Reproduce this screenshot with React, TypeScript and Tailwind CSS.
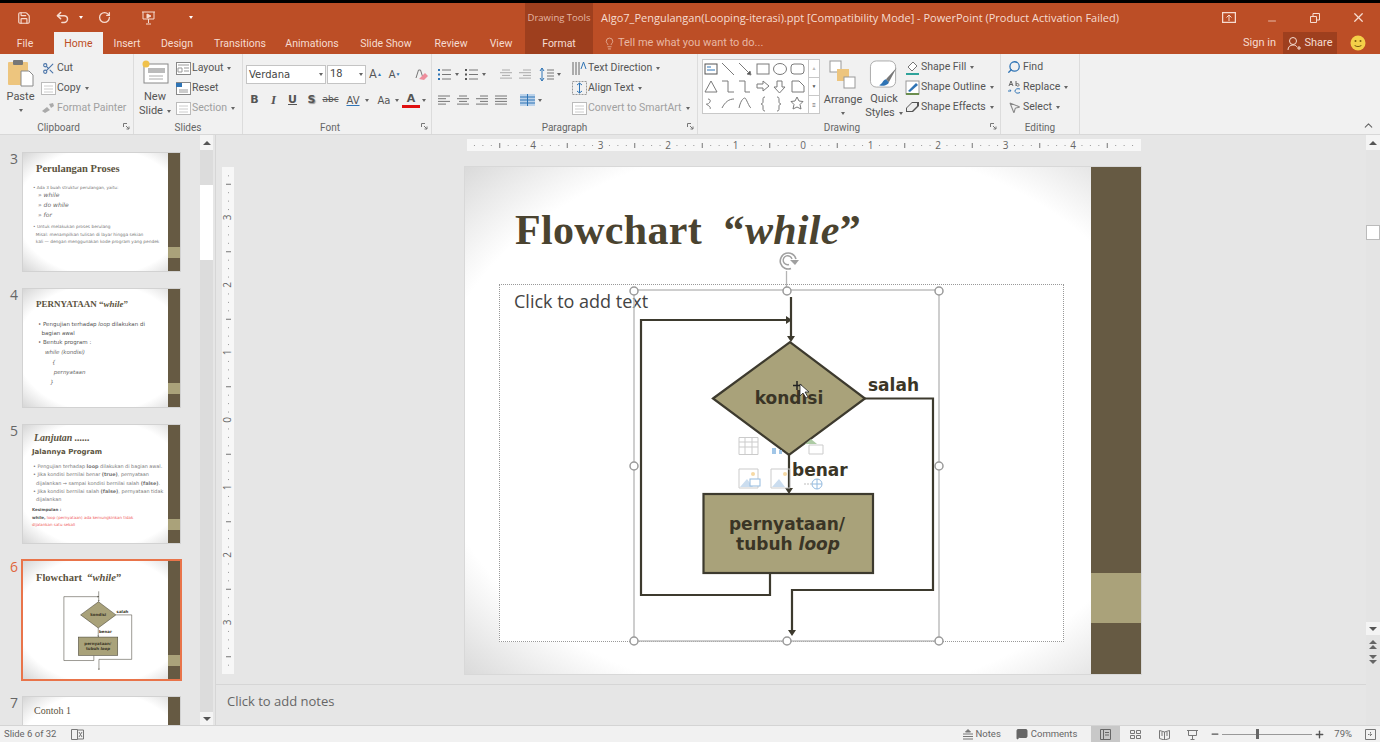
import React from 'react';
import { ChevronDown, Scissors, Undo2, RotateCcw, Save, X, Minus, Lightbulb, Search, MousePointer2, Plus, MessageSquare } from 'lucide-react';

const FONT = { fontFamily: '"Open Sans", "Noto Sans", sans-serif' };
const UI = { fontFamily: 'Roboto, "Open Sans", sans-serif' };

function Caret({ className = '' }: { className?: string }) {
  return <span className={`inline-block ml-1 align-middle w-0 h-0 border-x-[2.5px] border-x-transparent border-t-[3px] border-t-[#666] ${className}`} />;
}

function Launcher() {
  return (
    <svg className="absolute right-[3px] bottom-[4px]" width="7" height="7" viewBox="0 0 7 7" fill="none" stroke="#777">
      <path d="M.5 4V.5H4M3 3l3 3M6 3.5V6H3.5" />
    </svg>
  );
}

function Group({ label, width, pr = 0, children }: { label: string; width: number; pr?: number; children: React.ReactNode }) {
  return (
    <div className="relative h-full flex flex-col border-r border-[#dcdcdc] shrink-0" style={{ width }}>
      <div className="flex-1 flex min-h-0 pt-[4px]">{children}</div>
      <div className="h-[14px] text-center text-[10px] leading-[16px] text-[#666]" style={{ paddingRight: pr }}>{label}</div>
      {label !== 'Slides' && label !== 'Editing' && <Launcher />}
    </div>
  );
}

function Row({ icon, text, dim, caret, pl = 0 }: { icon?: React.ReactNode; text: string; dim?: boolean; caret?: boolean; pl?: number }) {
  return (
    <div className={`h-[20px] flex items-center whitespace-nowrap text-[10.5px] ${dim ? 'text-[#a0a0a0]' : 'text-[#555]'}`} style={{ paddingLeft: pl }}>
      <span className="w-[16px] h-[16px] flex items-center justify-center shrink-0">{icon}</span>
      <span className="ml-[1px]">{text}</span>
      {caret && <Caret />}
    </div>
  );
}

function Tab({ children, w, active }: { children: React.ReactNode; w: number; active?: boolean }) {
  return (
    <div className={`h-full flex items-center justify-center pt-[2px] text-[10.5px] shrink-0 ${active ? 'bg-[#f1f1f1] text-[#BC4E26]' : 'text-[#f6dcd1]'}`} style={{ ...UI, width: w }}>
      {children}
    </div>
  );
}

function PasteIcon() {
  return (
    <svg width="27" height="28" viewBox="0 0 27 28">
      <rect x="1" y="3" width="20" height="23" rx="1" fill="#EDC57E" />
      <rect x="6" y="1" width="10" height="5" rx="1" fill="#777" />
      <path d="M14 12h8l4 4v11H14z" fill="#fff" stroke="#8a8a8a" />
    </svg>
  );
}

function NewSlideIcon() {
  return (
    <svg width="28" height="28" viewBox="0 0 28 28">
      <rect x="3" y="5" width="24" height="19" fill="#fff" stroke="#888" />
      <rect x="7" y="9" width="17" height="5" fill="#bbb" />
      <path d="M8 17h14M8 20h14" stroke="#aaa" />
      <circle cx="5" cy="5" r="3.5" fill="#F0C14B" />
    </svg>
  );
}

function SmallLayout({ kind }: { kind: number }) {
  return (
    <svg width="15" height="13" viewBox="0 0 15 13" fill="none">
      <rect x=".5" y=".5" width="14" height="12" fill="#fff" stroke={kind === 2 ? '#bbb' : '#888'} />
      {kind === 0 && <path d="M2 3h11M2 6h4v4H2zM8 6h5M8 9h5" stroke="#999" />}
      {kind === 1 && <path d="M0 1h6v4H0z" fill="#2F74B5" />}
      {kind === 1 && <path d="M3 8h9M3 10h9" stroke="#999" />}
      {kind === 2 && <path d="M3 4h9M3 7h9M3 10h9" stroke="#ccc" />}
    </svg>
  );
}

function Lines({ kind, color = '#777' }: { kind: number; color?: string }) {
  const rows: [number, number][][] = [
    [[1, 13], [1, 9], [1, 13], [1, 9]],
    [[3, 11], [1, 13], [3, 11], [1, 13]],
    [[5, 13], [1, 13], [5, 13], [1, 13]],
    [[1, 13], [1, 13], [1, 13], [1, 13]],
  ];
  return (
    <svg width="14" height="12" viewBox="0 0 14 12" stroke={color}>
      {rows[kind].map(([a, b], i) => (
        <path key={i} d={`M${a} ${2 + i * 2.7}H${b}`} />
      ))}
    </svg>
  );
}

function BulletIcon({ numbered }: { numbered?: boolean }) {
  return (
    <svg width="15" height="13" viewBox="0 0 15 13" fill="none" stroke="#777">
      <path d="M5 2h9M5 6.500h9M5 11h9" />
      <path d="M1 2h2M1 6.500h2M1 11h2" stroke={numbered ? '#555' : '#2F74B5'} strokeWidth="2" />
    </svg>
  );
}

function ShapeGallery() {
  return (
    <div className="w-[118px] h-[55px] mt-[1px] ml-[4px] bg-white border border-[#c8c8c8] flex">
      <svg width="105" height="53" viewBox="703 60 105 53" fill="none" stroke="#7a7a7a">
        <rect x="705" y="64" width="12" height="10" stroke="#555" />
        <path d="M707 67h4M707 70h8" stroke="#2F74B5" />
        <path d="M722 63l12 12M739 63l12 12" />
        <path d="M751 75l-4-1 3-3z" fill="#555" />
        <rect x="757" y="64" width="12" height="10" />
        <ellipse cx="780" cy="69" rx="6.500" ry="5.500" />
        <rect x="791" y="64" width="13" height="10" rx="3" />
        <path d="M705 92l6-11 6 11zM722 81h6v11h6M739 81h6v11h5M757 84h6v-3l6 5-6 5v-3h-6zM777 81h5v6h3l-5.500 6-5.500-6h3zM792 81h7l5 5v6h-12z" />
        <path d="M708 99c4 0 2 5-1 5s5 2 3 5M722 108c3-6 7-9 12-9M739 108c2-9 5-10 6-10s4 9 6 10" />
        <path d="M765 97c-2 0-2 1-2 3v2c0 1-1 2-2 2 1 0 2 1 2 2v2c0 2 0 3 2 3M777 97c2 0 2 1 2 3v2c0 1 1 2 2 2-1 0-2 1-2 2v2c0 2 0 3-2 3" />
        <path d="M797 97l2 4 4 .5-3 3 1 4.500-4-2-4 2 1-4.500-3-3 4-.5z" />
      </svg>
      <div className="flex-1 flex flex-col border-l border-[#c8c8c8]">
        <div className="flex-1 flex items-center justify-center text-[5px] text-[#bbb]">▲</div>
        <div className="flex-1 flex items-center justify-center border-y border-[#c8c8c8] text-[5px] text-[#555]">▼</div>
        <div className="flex-1 flex items-center justify-center text-[6px] text-[#555]">≡</div>
      </div>
    </div>
  );
}

function Ribbon() {
  return (
    <div className="h-[81px] bg-[#f1f1f1] border-b border-[#d8d8d8] flex relative" style={UI}>
      <Group label="Clipboard" width={134} pr={16}>
        <div className="w-[39px] flex flex-col items-center text-[11px] text-[#555] ml-[1px] mt-[-1px]">
          <div className="h-[30px] pt-[2px]"><PasteIcon /></div>
          <div className="mt-[3px] leading-[14px]">Paste</div>
          <Caret className="!ml-0 mt-[5px]" />
        </div>
        <div>
          <Row icon={<Scissors size={13} color="#4a74a8" />} text="Cut" />
          <Row icon={<SmallLayout kind={2} />} text="Copy" caret />
          <Row dim icon={<svg width="14" height="12" viewBox="0 0 14 12"><path d="M1 9l5-4 3 3-5 3zM8 2l4-1 1 3-3 2z" fill="#aaa" /></svg>} text="Format Painter" />
        </div>
      </Group>
      <Group label="Slides" width={109}>
        <div className="w-[40px] flex flex-col items-center text-[11px] leading-[14px] text-[#555] ml-[1px] mt-[-1px]">
          <div className="h-[30px] pt-[2px]"><NewSlideIcon /></div>
          <div className="mt-[3px]">New</div>
          <div>Slide<Caret /></div>
        </div>
        <div>
          <Row icon={<SmallLayout kind={0} />} text="Layout" caret />
          <Row icon={<SmallLayout kind={1} />} text="Reset" />
          <Row dim icon={<SmallLayout kind={2} />} text="Section" caret />
        </div>
      </Group>
      <Group label="Font" width={189} pr={14}>
        <div className="flex flex-col pl-[3px] mt-[-1px]">
          <div className="h-[28px] flex items-start pt-[8px]">
            <div className="w-[80px] h-[19px] bg-white border border-[#c4c4c4] flex items-center justify-between px-[2px] text-[#444]" style={{ fontFamily: '"DejaVu Sans", sans-serif', fontSize: 10 }}>
              Verdana<Caret />
            </div>
            <div className="w-[39px] h-[19px] ml-[1px] bg-white border border-[#c4c4c4] flex items-center justify-between px-[2px] text-[11px] text-[#444]">
              18<Caret />
            </div>
            <span className="w-[19px] text-center text-[12px] leading-[19px] text-[#555]">A<sup className="text-[5px] text-[#2F74B5]">▲</sup></span>
            <span className="w-[19px] text-center text-[11px] leading-[19px] text-[#555]">A<sup className="text-[5px] text-[#2F74B5]">▼</sup></span>
            <svg className="ml-[9px] mt-[2px]" width="15" height="15" viewBox="0 0 15 15">
              <path d="M3 11l2.500-8h2L10 11" stroke="#777" fill="none" />
              <path d="M6 12l6-6 3 3-4 4z" fill="#EE8D9C" />
            </svg>
          </div>
          <div className="h-[30px] flex items-center text-[11px] text-[#555]" style={{ fontFamily: '"DejaVu Sans", sans-serif' }}>
            <span className="w-[19px] ml-[-1px] text-center font-bold">B</span>
            <span className="w-[19px] text-center italic font-bold" style={{ fontFamily: '"Liberation Serif", serif', fontSize: 13 }}>I</span>
            <span className="w-[19px] text-center underline font-bold">U</span>
            <span className="w-[19px] text-center font-bold [text-shadow:1px_1px_1px_#999]">S</span>
            <span className="w-[19px] text-center line-through text-[9px]">abc</span>
            <span className="w-[22px] ml-[2px] text-center underline decoration-[#2F74B5] text-[10px]">AV</span>
            <Caret className="!ml-[1px]" />
            <span className="w-[20px] ml-[5px] text-center text-[10px]">Aa</span>
            <Caret className="!ml-[1px]" />
            <span className="w-[18px] ml-[3px] text-center font-bold leading-[12px] border-b-[3px] border-[#E01010]">A</span>
            <Caret className="!ml-[2px]" />
          </div>
        </div>
      </Group>
      <Group label="Paragraph" width={266}>
        <div className="flex flex-col pl-[5px]">
          <div className="h-[28px] flex items-center mt-[2px]">
            <span className="w-[16px] mt-[1px]"><BulletIcon /></span><Caret className="!ml-[2px] !mr-[5px]" />
            <span className="w-[16px]"><BulletIcon numbered /></span><Caret className="!ml-[2px]" />
            <span className="ml-[13px]"><Lines kind={1} color="#aaa" /></span>
            <span className="ml-[5px]"><Lines kind={2} color="#aaa" /></span>
            <span className="ml-[7px]"><svg width="16" height="15" viewBox="0 0 16 15" fill="none"><path d="M3 1v13M1 4l2-3 2 3M1 11l2 3 2-3" stroke="#2F74B5" /><path d="M8 3h7M8 6h7M8 9h7M8 12h7" stroke="#777" /></svg></span>
            <Caret className="!ml-[2px]" />
          </div>
          <div className="h-[28px] flex items-center gap-[5px] mt-[-2px]">
            <Lines kind={0} /><Lines kind={1} /><Lines kind={2} /><Lines kind={3} />
            <svg className="ml-[7px]" width="15" height="12" viewBox="0 0 15 12"><rect width="15" height="12" fill="#BBD2EA" /><path d="M0 3h15M0 6h15M0 9h15M7.500 0v12" stroke="#2F74B5" /></svg>
            <Caret className="!ml-[-2px]" />
          </div>
        </div>
        <div className="ml-[10px]">
          <Row icon={<svg width="16" height="16" viewBox="0 0 16 16" fill="none" stroke="#666"><path d="M2 2v13M5 2v13M8 2v13" /><path d="M10 9l2.500-7L15 9" stroke="#2F74B5" /></svg>} text="Text Direction" caret />
          <Row icon={<svg width="15" height="14" viewBox="0 0 15 14" fill="none"><rect x=".5" y=".5" width="14" height="13" stroke="#999" strokeDasharray="2 1" /><path d="M7.500 2v10M5 4l2.500-2L10 4M5 10l2.500 2 2.500-2" stroke="#2F74B5" /></svg>} text="Align Text" caret />
          <Row dim icon={<SmallLayout kind={2} />} text="Convert to SmartArt" caret />
        </div>
      </Group>
      <Group label="Drawing" width={303} pr={14}>
        <ShapeGallery />
        <div className="w-[42px] ml-[2px] flex flex-col items-center text-[11px] leading-[14px] text-[#555] mt-[-1px]">
          <svg className="mt-[3px]" width="28" height="30" viewBox="0 0 28 30">
            <rect x="1" y="1" width="11" height="11" fill="#fff" stroke="#999" />
            <rect x="8" y="9" width="12" height="12" fill="#EDC57E" />
            <rect x="15" y="17" width="11" height="11" fill="#fff" stroke="#999" />
          </svg>
          <div className="mt-[3px]">Arrange</div>
          <Caret className="!ml-0 mt-[5px]" />
        </div>
        <div className="w-[40px] flex flex-col items-center text-[11px] leading-[14px] text-[#555] mt-[-1px]">
          <svg className="mt-[3px]" width="30" height="30" viewBox="0 0 30 30">
            <rect x="1" y="1" width="26" height="27" rx="6" fill="#fff" stroke="#aaa" />
            <path d="M28 8L17 20l3 3z" fill="#777" />
            <path d="M17 20c-4 1-3 5-7 6 5 2 10-1 10-3z" fill="#2F74B5" />
          </svg>
          <div className="mt-[3px]">Quick</div>
          <div>Styles<Caret /></div>
        </div>
        <div className="mt-[-1px]">
          <Row icon={<svg width="15" height="15" viewBox="0 0 15 15"><path d="M3 7l5-5 4 4-5 5z" fill="#fff" stroke="#777" /><path d="M1 13h13v2H1z" fill="#2FA39A" /></svg>} text="Shape Fill" caret />
          <Row icon={<svg width="15" height="15" viewBox="0 0 15 15"><rect x="1" y="1" width="13" height="13" fill="#fff" stroke="#999" /><path d="M3 11l8-8 2 2-8 7z" fill="#2F74B5" /><path d="M1 13h13v2H1z" fill="#6B8E4E" /></svg>} text="Shape Outline" caret />
          <Row icon={<svg width="15" height="14" viewBox="0 0 15 14"><path d="M1 8l6-6h7v4l-6 6H1z" fill="#555" /><path d="M2 8l5-5h5v3l-5 5H2z" fill="#eee" /></svg>} text="Shape Effects" caret />
        </div>
      </Group>
      <Group label="Editing" width={79}>
        <div className="pl-[5px] mt-[-1px]">
          <Row icon={<Search size={14} color="#2F74B5" strokeWidth={2.2} className="-scale-x-100" />} text="Find" />
          <Row icon={<svg width="15" height="14" viewBox="0 0 15 14" fill="none" stroke="#2F74B5"><path d="M2 6l2-5 2 5M3 4.500h2M9 1v5M9 4c2-1 3 0 3 1s-1 2-3 0" stroke="#666" /><path d="M1 11h3l-1-1.500M13 9c-3-1-5 .5-5 2s2 3 5 1.500" /></svg>} text="Replace" caret />
          <Row icon={<MousePointer2 size={13} color="#888" />} text="Select" caret />
        </div>
      </Group>
      <ChevronDown size={13} className="absolute right-[5px] bottom-[2px] rotate-180" color="#666" />
    </div>
  );
}

function Header() {
  return (
    <div className="h-[54px] bg-[#BC4E26] border-t-[3px] border-black relative flex flex-col text-[#f6dcd1]">
      <div className="h-[29px] flex items-center relative">
        <div className="w-[525px] flex items-center shrink-0">
          <Save size={14} className="ml-[17px]" strokeWidth={2} />
          <Undo2 size={15} className="ml-[24px]" strokeWidth={2.4} />
          <Caret className="!ml-[9px] !border-t-white" />
          <RotateCcw size={13} className="ml-[15px] -scale-x-100" strokeWidth={2.4} />
          <svg className="ml-[30px]" width="15" height="14" viewBox="0 0 15 14" fill="none" stroke="#f6dcd1">
            <path d="M1 1h13M2 1v7h11V1M7.500 8v4M5 13h5" />
            <path d="M6 3l4 2-4 2z" fill="#f6dcd1" />
          </svg>
          <Caret className="!ml-[33px] !border-t-white" />
        </div>
        <div className="w-[68px] h-full bg-[#9E3F1E] text-[9.500px] flex items-center justify-center shrink-0 text-[#e5b6a3] pt-[1px]">Drawing Tools</div>
        <div className="ml-[8px] pt-[1px] text-[11px] whitespace-nowrap">Algo7_Pengulangan(Looping-iterasi).ppt [Compatibility Mode] - PowerPoint (Product Activation Failed)</div>
        <svg className="absolute left-[1222px]" width="14" height="11" viewBox="0 0 14 11" fill="none" stroke="#f6dcd1"><rect x=".5" y=".5" width="13" height="10" strokeWidth="1.500" /><path d="M7 9V3M4.500 5.500L7 3l2.500 2.500" /></svg>
        <Minus size={12} className="absolute left-[1266px] top-[12px]" strokeWidth={1.500} />
        <svg className="absolute left-[1310px]" width="10" height="10" viewBox="0 0 10 10" fill="none" stroke="#f6dcd1"><path d="M.5 3.500h6v6h-6zM3 3.500V.5h6.500V7H7" /></svg>
        <X size={15} className="absolute left-[1351px]" strokeWidth={2} />
      </div>
      <div className="h-[22px] flex items-stretch">
        <Tab w={50}>File</Tab>
        <div className="w-[4px]" />
        <Tab w={49} active>Home</Tab>
        <Tab w={48}>Insert</Tab>
        <Tab w={52}>Design</Tab>
        <Tab w={74}>Transitions</Tab>
        <Tab w={70}>Animations</Tab>
        <Tab w={78}>Slide Show</Tab>
        <Tab w={52}>Review</Tab>
        <Tab w={48}>View</Tab>
        <div className="w-[68px] bg-[#9E3F1E] flex items-center justify-center pt-[2px] text-[10.5px] shrink-0" style={UI}>Format</div>
        <div className="ml-[10px] flex items-center pt-[1px] text-[#e8b7a3]" style={UI}>
          <Lightbulb size={13} strokeWidth={1.500} />
          <span className="ml-[2px] text-[11px]">Tell me what you want to do...</span>
        </div>
        <div className="ml-auto flex items-center text-[11px]" style={UI}>
          <span>Sign in</span>
          <div className="ml-[7px] w-[54px] h-full bg-[#9E3F1E] flex items-center justify-center">
            <svg width="15" height="15" viewBox="0 0 15 15" fill="none" stroke="#f6dcd1"><circle cx="6" cy="5" r="3.500" /><path d="M1 14c0-3 2-5 5-5s3 1 4 2M10 12h4M12 10v4" /></svg>
            <span className="ml-[2px]">Share</span>
          </div>
          <svg className="ml-[13px] mr-[14px]" width="16" height="16" viewBox="0 0 16 16">
            <circle cx="8" cy="8" r="7.500" fill="#F4D048" />
            <circle cx="5.500" cy="6" r="1" fill="#7a5b10" />
            <circle cx="10.500" cy="6" r="1" fill="#7a5b10" />
            <path d="M4.500 10c1 2 6 2 7 0" stroke="#7a5b10" fill="none" />
          </svg>
        </div>
      </div>
    </div>
  );
}

function Flowchart({ width, height, detail }: { width: number; height: number; detail?: boolean }) {
  const stroke = '#3d3a2e';
  const text = { fontFamily: '"DejaVu Sans", Verdana, sans-serif', fontWeight: 700, fontSize: 17, fill: '#3a3526' };
  return (
    <svg width={width} height={height} viewBox="465 167 676 507" className="absolute left-0 top-0" fill="none">
      <path d="M791 297V338M791 320H641V595H770V574M789 455V490M865 398.500H933V590H792V632" stroke={stroke} strokeWidth="2.200" />
      <path d="M787 336h8l-4 6zM786 316v8l6-4zM785 488h8l-4 6zM788 630h8l-4 6z" fill={stroke} />
      <path d="M713 398.500L790 342L865 398.500L789 455z" fill="#A9A27A" stroke={stroke} strokeWidth="2.200" />
      <rect x="703.500" y="494" width="169.500" height="79" fill="#A9A27A" stroke={stroke} strokeWidth="2.200" />
      <g style={text}>
        <text x="789" y="404" textAnchor="middle">kondisi</text>
        <text x="868" y="391">salah</text>
        <text x="792" y="476">benar</text>
        <text x="787" y="530" textAnchor="middle">pernyataan/</text>
        <text x="788" y="550" textAnchor="middle">tubuh <tspan fontStyle="italic">loop</tspan></text>
      </g>
      {detail && (
        <g stroke="#c9c9c9" opacity=".95">
          <path d="M739 437.500h19v17h-19zM739 442h19M739 447h19M745 438v16M752 438v16" />
          <path d="M772 448h4v6h-4zM779 450h3v4h-3z" fill="#9DC3E6" stroke="none" />
          <path d="M805 444l6-5 6 5z" fill="#A9C9A0" stroke="none" />
          <path d="M809 445h14v9h-14z" fill="#fff" />
          <path d="M739 469h19v19h-19z" />
          <path d="M740 487l7-8 6 8z" fill="#C9DCEF" stroke="none" />
          <circle cx="753" cy="474" r="2" fill="#F6D7A0" stroke="none" />
          <rect x="750" y="479" width="10" height="7" fill="#fff" stroke="#8FB8DE" />
          <path d="M771 469h19v19h-19z" />
          <path d="M772 487l7-8 6 8z" fill="#C9DCEF" stroke="none" />
          <circle cx="785" cy="474" r="2" fill="#F6D7A0" stroke="none" />
          <circle cx="817" cy="484" r="5" fill="#fff" stroke="#8FB8DE" />
          <path d="M812 484h10M817 479v10" stroke="#8FB8DE" />
          <path d="M804 484h8" stroke="#bbb" strokeDasharray="2 1" />
        </g>
      )}
    </svg>
  );
}

function Handles() {
  const pts = [[634, 291], [787, 291], [939, 291], [634, 466], [939, 466], [634, 641], [787, 641], [939, 641]];
  return (
    <svg width="676" height="507" viewBox="465 167 676 507" className="absolute left-0 top-0" fill="none">
      <rect x="634" y="290" width="305" height="351" stroke="#b4b4b4" strokeWidth="1.300" />
      <path d="M786.500 291V271" stroke="#b4b4b4" strokeWidth="1.300" />
      {pts.map(([x, y]) => (
        <circle key={`${x}-${y}`} cx={x} cy={y} r="4" fill="#fff" stroke="#9a9a9a" strokeWidth="1.500" />
      ))}
      <path d="M796 259a8 8 0 1 0-5 9.500" stroke="#a0a0a0" strokeWidth="1.600" />
      <path d="M792 259a4.500 4.500 0 1 0-3 5.500" stroke="#a0a0a0" strokeWidth="1.400" />
      <path d="M790 260h9l-4 5z" fill="#a0a0a0" />
      <path d="M797 381v9M793 385.500h9" stroke="#222" strokeWidth="1.500" />
      <path d="M800 384v12l3-3 3 5 2-1-3-5h4z" fill="#fff" stroke="#222" strokeWidth=".8" />
    </svg>
  );
}

function MainSlide() {
  return (
    <div className="relative w-[676px] h-[507px] shrink-0 outline outline-[#d8d8d8] bg-[radial-gradient(ellipse_at_center,#ffffff_78%,#dadada_100%)]">
      <div className="absolute right-0 top-0 bottom-0 w-[50px] bg-[#665A43]">
        <div className="mt-[406px] h-[50px] bg-[#AAA27A]" />
      </div>
      <div className="pl-[50px] pt-[36px] text-[42px] leading-[54px] font-bold tracking-[.3px] text-[#4a4330] whitespace-nowrap" style={{ fontFamily: '"Liberation Serif", serif' }}>
        Flowchart &nbsp;“<span className="italic">while</span>”
      </div>
      <div className="absolute left-[34px] top-[117px] w-[565px] h-[358px] bg-white border border-dotted border-[#999] pl-[14px] pt-[3px] text-[18px] leading-[26px] text-[#444]" style={FONT}>Click to add text</div>
      <Flowchart width={676} height={507} detail />
      <Handles />
    </div>
  );
}

function HRuler() {
  const ticks = Array.from({ length: 81 }, (_, i) => i - 40);
  const unit = 67.5 / 8;
  return (
    <svg width="674" height="12" viewBox="467 139 674 12" className="bg-[#f7f7f7] block" style={FONT}>
      {ticks.map(t => {
        const x = 803 + t * unit;
        if (x < 468 || x > 1140) return null;
        if (t % 8 === 0) return <text key={t} x={x} y="149" textAnchor="middle" fontSize="10" fill="#666">{Math.abs(t / 8)}</text>;
        if (t % 4 === 0) return <rect key={t} x={x} y="143" width="1" height="5" fill="#777" />;
        return <rect key={t} x={x} y="145" width="1" height="1" fill="#999" />;
      })}
    </svg>
  );
}

function VRuler() {
  const ticks = Array.from({ length: 61 }, (_, i) => i - 30);
  const unit = 67.5 / 8;
  return (
    <svg width="12" height="507" viewBox="222 167 12 507" className="bg-[#f7f7f7] block shrink-0" style={FONT}>
      {ticks.map(t => {
        const y = 420 + t * unit;
        if (y < 168 || y > 673) return null;
        if (t % 8 === 0) return <text key={t} x="228" y={y} textAnchor="middle" dominantBaseline="middle" fontSize="10" fill="#666" transform={`rotate(-90 228 ${y})`}>{Math.abs(t / 8)}</text>;
        if (t % 4 === 0) return <rect key={t} x="226" y={y} width="5" height="1" fill="#777" />;
        return <rect key={t} x="228" y={y} width="1" height="1" fill="#999" />;
      })}
    </svg>
  );
}

function Thumb({ n, active, children }: { n: number; active?: boolean; children: React.ReactNode }) {
  return (
    <div className="flex shrink-0 mb-[18px]">
      <div className={`w-[23px] pl-[10px] text-[14px] leading-[14px] mt-[-1px] ${active ? 'text-[#E0673C]' : 'text-[#666]'}`}>{n}</div>
      <div className={`relative w-[157px] h-[118px] overflow-hidden shrink-0 bg-[radial-gradient(ellipse_at_center,#ffffff_76%,#d6d6d6_100%)] ${active ? 'outline-2 outline-offset-0 outline-[#E9744A]' : 'outline outline-[#d2d2d2]'}`}>
        <div className="absolute right-0 top-0 bottom-0 w-[12px] bg-[#665A43]">
          <div className="mt-[94px] h-[11px] bg-[#AAA27A]" />
        </div>
        <div className="w-[145px] h-full text-[#777]" style={{ fontFamily: '"DejaVu Sans", sans-serif' }}>{children}</div>
      </div>
    </div>
  );
}

function ThumbTitle({ children, pl = 13 }: { children: React.ReactNode; pl?: number }) {
  return <div className="font-bold text-[#5b5340] whitespace-nowrap" style={{ fontFamily: '"Liberation Serif", serif', paddingLeft: pl }}>{children}</div>;
}

function SlidePanel() {
  return (
    <div className="w-[216px] h-full relative flex border-r border-[#d6d6d6] shrink-0 overflow-hidden">
      <div className="w-[200px] pt-[18px] flex flex-col overflow-hidden">
        <Thumb n={3}>
          <div className="pt-[9px] text-[10.500px] leading-[14px]"><ThumbTitle>Perulangan Proses</ThumbTitle></div>
          <div className="pl-[10px] pt-[8px] text-[4.200px] leading-[7px] whitespace-nowrap">• Ada 3 buah struktur perulangan, yaitu:</div>
          <div className="pl-[15px] mt-[-1px] text-[6px] leading-[10px] italic text-[#666]">» while<br />» do while<br />» for</div>
          <div className="pl-[10px] pt-[3px] text-[4.300px] leading-[7.500px] whitespace-nowrap">• Untuk melakukan proses berulang<br />&nbsp;&nbsp;Misal: menampilkan tulisan di layar hingga sekian<br />&nbsp;&nbsp;kali — dengan menggunakan kode program yang pendek</div>
        </Thumb>
        <Thumb n={4}>
          <div className="pt-[8px] text-[9px] leading-[14px]"><ThumbTitle>PERNYATAAN “<i>while</i>”</ThumbTitle></div>
          <div className="pl-[15px] pt-[9px] text-[5.500px] leading-[9px] text-[#555]">• Pengujian terhadap <i>loop</i> dilakukan di<br />&nbsp;&nbsp;bagian awal<br />• Bentuk program :</div>
          <div className="pl-[22px] text-[5.500px] leading-[10px] italic text-[#666]">while (kondisi)<br />&nbsp;&nbsp;&nbsp;&nbsp;{'{'}<br />&nbsp;&nbsp;&nbsp;&nbsp;&nbsp;pernyataan<br />&nbsp;&nbsp;&nbsp;{'}'}</div>
        </Thumb>
        <Thumb n={5}>
          <div className="pt-[6px] text-[10px] leading-[13px]"><ThumbTitle pl={11}><i>Lanjutan ......</i></ThumbTitle></div>
          <div className="pl-[9px] pt-[2px] text-[7px] leading-[12px] font-bold text-[#5b5340]">Jalannya Program</div>
          <div className="pl-[10px] pt-[4px] text-[4.900px] leading-[8.300px] whitespace-nowrap">• Pengujian terhadap <b>loop</b> dilakukan di bagian awal.<br />• Jika kondisi bernilai benar <b>(true)</b>, pernyataan<br />&nbsp;&nbsp;dijalankan → sampai kondisi bernilai salah <b>(false)</b>.<br />• Jika kondisi bernilai salah <b>(false)</b>, pernyataan tidak<br />&nbsp;&nbsp;dijalankan</div>
          <div className="pl-[9px] pt-[3px] text-[4px] leading-[7.500px] whitespace-nowrap text-[#F06060]"><b className="text-[#555]">Kesimpulan :</b><br /><b className="text-[#555]">while,</b> loop (pernyataan) ada kemungkinkan tidak<br />dijalankan satu sekali</div>
        </Thumb>
        <Thumb n={6} active>
          <div className="pt-[10px] text-[10.500px] leading-[14px]"><ThumbTitle>Flowchart &nbsp;“<i>while</i>”</ThumbTitle></div>
          <Flowchart width={157} height={118} />
        </Thumb>
        <Thumb n={7}>
          <div className="pt-[7px] text-[10px] leading-[14px] pl-[11px] text-[#5b5340]" style={{ fontFamily: '"Liberation Serif", serif' }}>Contoh 1</div>
          <div className="pl-[13px] pt-[6px] text-[5.500px] leading-[9px] text-[#555] whitespace-nowrap">• Buatlah algoritma dan program untuk</div>
        </Thumb>
      </div>
      <div className="w-[13px] h-full bg-[#dcdcdc] flex flex-col items-stretch shrink-0">
        <div className="h-[15px] bg-[#f4f4f4] flex items-center justify-center"><span className="w-0 h-0 border-x-[4px] border-x-transparent border-b-[4px] border-b-[#555]" /></div>
        <div className="mt-[35px] h-[75px] bg-white" />
        <div className="mt-auto h-[13px] bg-[#f4f4f4] flex items-center justify-center"><span className="w-0 h-0 border-x-[4px] border-x-transparent border-t-[4px] border-t-[#555]" /></div>
      </div>
    </div>
  );
}

function RightScroll() {
  return (
    <div className="w-[14px] h-full bg-[#e4e4e4] flex flex-col shrink-0">
      <div className="h-[15px] bg-[#f4f4f4] flex items-center justify-center"><span className="w-0 h-0 border-x-[4px] border-x-transparent border-b-[4px] border-b-[#555]" /></div>
      <div className="mt-[75px] h-[15px] bg-white border border-[#bbb]" />
      <div className="mt-[382px] h-[13px] bg-[#f4f4f4] flex items-center justify-center"><span className="w-0 h-0 border-x-[4px] border-x-transparent border-t-[4px] border-t-[#555]" /></div>
      <div className="h-[15px] mt-[2px] flex items-center justify-center">
        <svg width="8" height="9" viewBox="0 0 8 9" fill="#666"><path d="M0 4l4-4 4 4zM0 9l4-4 4 4z" /></svg>
      </div>
      <div className="h-[15px] flex items-center justify-center">
        <svg width="8" height="9" viewBox="0 0 8 9" fill="#666"><path d="M0 0h8L4 4zM0 5h8L4 9z" /></svg>
      </div>
    </div>
  );
}

function StatusBar() {
  return (
    <div className="h-[17px] bg-[#f1f1f1] border-t border-[#d4d4d4] flex items-center text-[9.5px] text-[#666] relative" style={UI}>
      <span className="ml-[4px]">Slide 6 of 32</span>
      <svg className="ml-[15px]" width="13" height="11" viewBox="0 0 13 11" fill="none" stroke="#777"><path d="M.5.5h6v10h-6zM6.500 1h6v9h-6M8 3l3 5M11 3L8 8" /></svg>
      <svg className="ml-auto" width="12" height="11" viewBox="0 0 12 11" stroke="#777"><path d="M6 .5L3.500 3h5zM1 5h10M1 7.500h10M1 10h10" fill="#777" /></svg>
      <span className="ml-[2px]">Notes</span>
      <MessageSquare size={12} className="ml-[15px]" fill="#666" color="#666" />
      <span className="ml-[3px]">Comments</span>
      <div className="ml-[14px] w-[29px] h-[16px] bg-[#c8c8c8] flex items-center justify-center">
        <svg width="11" height="11" viewBox="0 0 11 11" fill="none" stroke="#666"><path d="M.5.5h10v10H.500zM3.500.5v10M5 3.500h4M5 6h4" /></svg>
      </div>
      <svg className="ml-[10px]" width="11" height="11" viewBox="0 0 11 11" fill="none" stroke="#777"><path d="M.5 1.500h4v3h-4zM6.500 1.500h4v3h-4zM.5 6.500h4v3h-4zM6.500 6.500h4v3h-4z" /></svg>
      <svg className="ml-[18px]" width="11" height="11" viewBox="0 0 11 11" fill="none" stroke="#777"><path d="M.5 1.500L5.500 3l5-1.500v8L5.500 11l-5-1.500zM5.500 3v8M2 4h2M2 6h2M7 4h2M7 6h2" /></svg>
      <svg className="ml-[17px]" width="11" height="11" viewBox="0 0 11 11" fill="none" stroke="#777"><path d="M0 1.500h11M1.500 1.500v5h8v-5M5.500 6.500v4M3.500 10.500h4" /></svg>
      <Minus size={10} className="ml-[12px]" strokeWidth={3} color="#555" />
      <div className="w-[90px] h-[1px] bg-[#999] relative ml-[2px]">
        <span className="absolute left-[34px] top-[-5px] w-[3px] h-[10px] bg-[#666]" />
      </div>
      <Plus size={11} className="ml-[2px]" strokeWidth={3} color="#555" />
      <span className="ml-[9px]">79%</span>
      <svg className="ml-[13px] mr-[4px]" width="11" height="11" viewBox="0 0 11 11" fill="none" stroke="#777"><path d="M.5.5h10v10H.5z" /><path d="M3 5.500h5M5.500 3v5" strokeDasharray="1.500 1" /></svg>
    </div>
  );
}

export default function App() {
  return (
    <div className="w-[1380px] h-[742px] overflow-hidden flex flex-col bg-[#e6e6e6]" style={FONT}>
      <Header />
      <Ribbon />
      <div className="flex-1 flex min-h-0">
        <SlidePanel />
        <div className="flex-1 flex flex-col min-w-0">
          <div className="h-[550px] border-b border-[#d6d6d6]">
            <div className="ml-[251px] pt-[4px]"><HRuler /></div>
            <div className="flex mt-[16px] ml-[6px]">
              <VRuler />
              <div className="ml-[231px]"><MainSlide /></div>
            </div>
          </div>
          <div className="flex-1 pl-[11px] pt-[6px] text-[13px] leading-[20px] text-[#666]">Click to add notes</div>
        </div>
        <RightScroll />
      </div>
      <StatusBar />
    </div>
  );
}
